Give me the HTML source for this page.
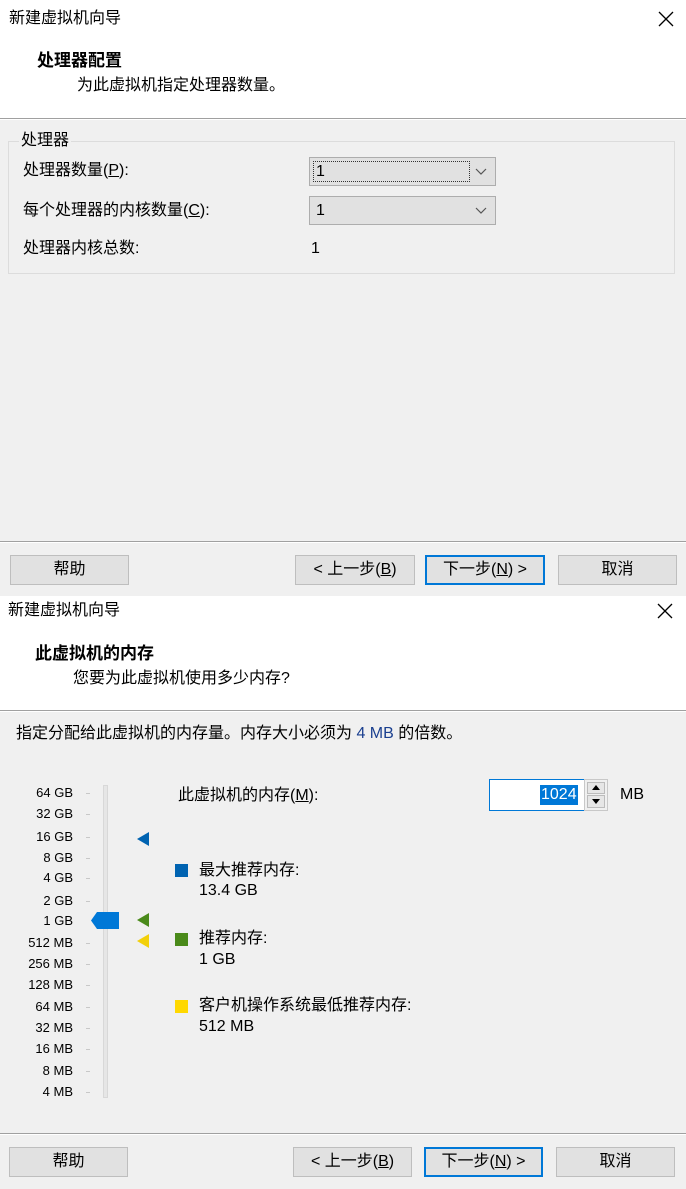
<!DOCTYPE html>
<html><head><meta charset="utf-8">
<style>
*{margin:0;padding:0;box-sizing:border-box}
body{width:686px;height:1189px;position:relative;overflow:hidden;background:#f0f0f0;font-family:"Liberation Sans","Noto Sans CJK SC",sans-serif;font-size:16px;color:#000}
.a{position:absolute;white-space:nowrap;line-height:20px}
.white{position:absolute;left:0;width:686px;background:#fff}
.hl{position:absolute;left:0;width:686px;height:2px;background:#a0a0a0;border-bottom:1px solid #fff}
.btn{position:absolute;height:30px;background:#e1e1e1;border:1px solid #adadadaa;text-align:center;line-height:28px;font-size:16px}
.btn.def{border:2px solid #0078d7;line-height:26px}
.combo{position:absolute;left:309px;width:187px;height:29px;background:#e1e1e1;border:1px solid #adadad}
.combo span{position:absolute;left:6px;top:5px;line-height:18px}
.combo svg{position:absolute;right:8px;top:10px}
u{text-decoration:underline}
.lbl{position:absolute;right:613px;font-size:13px;line-height:16px;white-space:nowrap}
.tick{position:absolute;left:86px;width:4px;height:1px;background:#c8c8c8}
.bold{font-weight:bold;font-size:17px}
</style></head><body>
<!-- top dialog -->
<div class="white" style="top:0;height:118px"></div>
<div class="a" style="left:9px;top:9px">新建虚拟机向导</div>
<svg class="a" style="left:658px;top:11px" width="16" height="16"><path d="M1 1L15 15M15 1L1 15" stroke="#000" stroke-width="1.3"/></svg>
<div class="a bold" style="left:37px;top:51px">处理器配置</div>
<div class="a" style="left:77px;top:76px">为此虚拟机指定处理器数量。</div>
<div class="hl" style="top:118px"></div>
<div style="position:absolute;left:8px;top:141px;width:667px;height:133px;border:1px solid #dcdcdc"></div>
<div class="a" style="left:19px;top:131px;background:#f0f0f0;padding:0 2px">处理器</div>
<div class="a" style="left:23px;top:161px">处理器数量(<u>P</u>):</div>
<div class="combo" style="top:157px"><div style="position:absolute;left:3px;top:3px;width:157px;height:21px;border:1px dotted #333"></div><span>1</span><svg width="12" height="8"><path d="M1 1L6 6L11 1" fill="none" stroke="#555" stroke-width="1.2"/></svg></div>
<div class="a" style="left:23px;top:201px">每个处理器的内核数量(<u>C</u>):</div>
<div class="combo" style="top:196px"><span>1</span><svg width="12" height="8"><path d="M1 1L6 6L11 1" fill="none" stroke="#555" stroke-width="1.2"/></svg></div>
<div class="a" style="left:23px;top:239px">处理器内核总数:</div>
<div class="a" style="left:311px;top:239px">1</div>
<div class="hl" style="top:541px"></div>
<div class="btn" style="left:10px;top:555px;width:119px">帮助</div>
<div class="btn" style="left:295px;top:555px;width:120px">&lt; 上一步(<u>B</u>)</div>
<div class="btn def" style="left:425px;top:555px;width:120px">下一步(<u>N</u>) &gt;</div>
<div class="btn" style="left:558px;top:555px;width:119px">取消</div>

<!-- bottom dialog -->
<div class="white" style="top:596px;height:115px"></div>
<div class="a" style="left:8px;top:601px">新建虚拟机向导</div>
<svg class="a" style="left:657px;top:603px" width="16" height="16"><path d="M1 1L15 15M15 1L1 15" stroke="#000" stroke-width="1.3"/></svg>
<div class="a bold" style="left:35px;top:644px">此虚拟机的内存</div>
<div class="a" style="left:73px;top:669px">您要为此虚拟机使用多少内存?</div>
<div class="hl" style="top:710px"></div>
<div class="a" style="left:16px;top:724px">指定分配给此虚拟机的内存量。内存大小必须为 <span style="color:#1a3f8f">4 MB</span> 的倍数。</div>

<div style="position:absolute;left:103px;top:785px;width:5px;height:313px;background:#e6e6e6;border:1px solid #d8d8d8"></div>
<div class="lbl" style="top:785px">64 GB</div><div class="tick" style="top:793px"></div>
<div class="lbl" style="top:806px">32 GB</div><div class="tick" style="top:814px"></div>
<div class="lbl" style="top:829px">16 GB</div><div class="tick" style="top:837px"></div>
<div class="lbl" style="top:850px">8 GB</div><div class="tick" style="top:858px"></div>
<div class="lbl" style="top:870px">4 GB</div><div class="tick" style="top:878px"></div>
<div class="lbl" style="top:893px">2 GB</div><div class="tick" style="top:901px"></div>
<div class="lbl" style="top:913px">1 GB</div>
<div class="lbl" style="top:935px">512 MB</div><div class="tick" style="top:943px"></div>
<div class="lbl" style="top:956px">256 MB</div><div class="tick" style="top:964px"></div>
<div class="lbl" style="top:977px">128 MB</div><div class="tick" style="top:985px"></div>
<div class="lbl" style="top:999px">64 MB</div><div class="tick" style="top:1007px"></div>
<div class="lbl" style="top:1020px">32 MB</div><div class="tick" style="top:1028px"></div>
<div class="lbl" style="top:1041px">16 MB</div><div class="tick" style="top:1049px"></div>
<div class="lbl" style="top:1063px">8 MB</div><div class="tick" style="top:1071px"></div>
<div class="lbl" style="top:1084px">4 MB</div><div class="tick" style="top:1092px"></div>
<svg class="a" style="left:91px;top:912px" width="29" height="17"><path d="M0 8.5L6 0H28V17H6Z" fill="#0078d7"/></svg>
<svg class="a" style="left:137px;top:832px" width="13" height="14"><path d="M0 7L12 0V14Z" fill="#0063b1"/></svg>
<svg class="a" style="left:137px;top:913px" width="13" height="14"><path d="M0 7L12 0V14Z" fill="#4a8a1a"/></svg>
<svg class="a" style="left:137px;top:934px" width="13" height="14"><path d="M0 7L12 0V14Z" fill="#f2d00a"/></svg>

<div class="a" style="left:178px;top:786px">此虚拟机的内存(<u>M</u>):</div>
<div style="position:absolute;left:489px;top:779px;width:96px;height:32px;background:#fff;border:1px solid #0078d7"></div>
<div class="a" style="left:540px;top:785px;background:#0078d7;color:#fff;font-size:16px;padding:0 1px">1024</div>
<div style="position:absolute;left:584px;top:779px;width:24px;height:32px;background:#f0f0f0;border:1px solid #c8c8c8"></div>
<div style="position:absolute;left:587px;top:782px;width:18px;height:12px;background:#e6e6e6;border:1px solid #bcbcbc"></div>
<div style="position:absolute;left:587px;top:795px;width:18px;height:13px;background:#e6e6e6;border:1px solid #bcbcbc"></div>
<svg class="a" style="left:592px;top:785px" width="8" height="6"><path d="M0 5L4 0L8 5Z" fill="#000"/></svg>
<svg class="a" style="left:592px;top:799px" width="8" height="6"><path d="M0 0L4 5L8 0Z" fill="#000"/></svg>
<div class="a" style="left:620px;top:785px">MB</div>

<div style="position:absolute;left:175px;top:864px;width:13px;height:13px;background:#0063b1"></div>
<div class="a" style="left:199px;top:861px">最大推荐内存:</div>
<div class="a" style="left:199px;top:881px">13.4 GB</div>
<div style="position:absolute;left:175px;top:933px;width:13px;height:13px;background:#4a8a1a"></div>
<div class="a" style="left:199px;top:929px">推荐内存:</div>
<div class="a" style="left:199px;top:950px">1 GB</div>
<div style="position:absolute;left:175px;top:1000px;width:13px;height:13px;background:#ffd800"></div>
<div class="a" style="left:199px;top:996px">客户机操作系统最低推荐内存:</div>
<div class="a" style="left:199px;top:1017px">512 MB</div>

<div class="hl" style="top:1133px"></div>
<div class="btn" style="left:9px;top:1147px;width:119px">帮助</div>
<div class="btn" style="left:293px;top:1147px;width:119px">&lt; 上一步(<u>B</u>)</div>
<div class="btn def" style="left:424px;top:1147px;width:119px">下一步(<u>N</u>) &gt;</div>
<div class="btn" style="left:556px;top:1147px;width:119px">取消</div>
</body></html>
